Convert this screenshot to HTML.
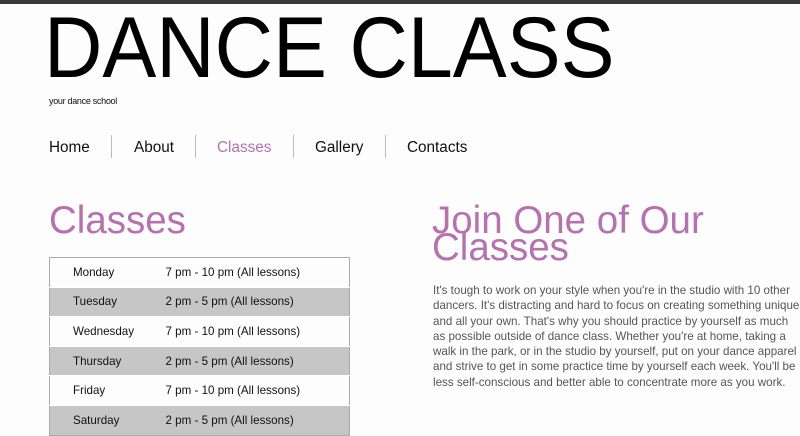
<!DOCTYPE html>
<html><head><meta charset="utf-8"><style>
*{margin:0;padding:0;box-sizing:border-box}
body{width:800px;height:434px;overflow:hidden;background:#fdfdfd;font-family:"Liberation Sans",Arial,sans-serif;position:relative}
.bar{position:absolute;left:0;top:0;width:800px;height:4px;background:#3a3a3a}
.t{position:absolute;left:44px;top:3px;font-size:86px;line-height:90px;color:#000;white-space:nowrap;transform:scaleX(0.94);transform-origin:0 0}
.sub{position:absolute;left:49px;top:96px;font-size:9px;color:#111;letter-spacing:-0.3px}
.nav{position:absolute;top:139px;font-size:15.3px;line-height:18px;color:#111}
.sep{position:absolute;top:135px;width:1px;height:23px;background:#bbb}
.h{position:absolute;color:#b572ae;font-size:38.5px;line-height:27px}
table{position:absolute;left:49px;top:257px;width:301px;border:1px solid #aaa;border-collapse:collapse;font-size:11.6px;color:#111}
td{height:29.6px;padding:0}
td:first-child{padding-left:23px;width:116px}
tr:nth-child(even) td{background:#c6c6c6}
tr+tr td{border-top:1px solid #fff}
p{position:absolute;left:433px;top:283px;width:368px;font-size:11.6px;line-height:15.3px;color:#555}
</style></head><body>
<div class="bar"></div>
<div class="t">DANCE CLASS</div>
<div class="sub">your dance school</div>
<div class="nav" style="left:49px">Home</div>
<div class="sep" style="left:111px"></div>
<div class="nav" style="left:134px">About</div>
<div class="sep" style="left:195px"></div>
<div class="nav" style="left:217px;color:#b572ae">Classes</div>
<div class="sep" style="left:293px"></div>
<div class="nav" style="left:315px">Gallery</div>
<div class="sep" style="left:385px"></div>
<div class="nav" style="left:407px">Contacts</div>
<div class="h" style="left:49px;top:207px">Classes</div>
<div class="h" style="left:432px;top:207px">Join One of Our<br>Classes</div>
<table>
<tr><td>Monday</td><td>7 pm - 10 pm (All lessons)</td></tr>
<tr><td>Tuesday</td><td>2 pm - 5 pm (All lessons)</td></tr>
<tr><td>Wednesday</td><td>7 pm - 10 pm (All lessons)</td></tr>
<tr><td>Thursday</td><td>2 pm - 5 pm (All lessons)</td></tr>
<tr><td>Friday</td><td>7 pm - 10 pm (All lessons)</td></tr>
<tr><td>Saturday</td><td>2 pm - 5 pm (All lessons)</td></tr>
</table>
<p>It's tough to work on your style when you're in the studio with 10 other dancers. It's distracting and hard to focus on creating something unique and all your own. That's why you should practice by yourself as much as possible outside of dance class. Whether you're at home, taking a walk in the park, or in the studio by yourself, put on your dance apparel and strive to get in some practice time by yourself each week. You'll be less self-conscious and better able to concentrate more as you work.</p>
</body></html>
